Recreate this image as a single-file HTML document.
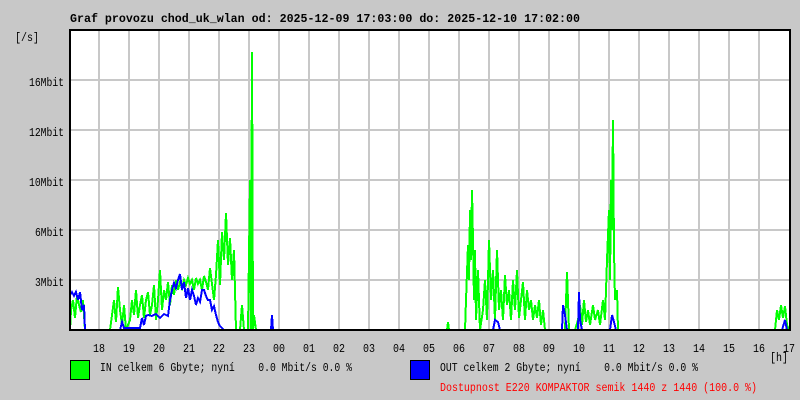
<!DOCTYPE html>
<html><head><meta charset="utf-8"><style>
html,body{margin:0;padding:0;background:#c8c8c8;width:800px;height:400px;overflow:hidden}
svg{display:block}
text{font-family:"Liberation Mono",monospace;font-size:11.5px;fill:#000}
</style></head><body>
<svg width="800" height="400" viewBox="0 0 800 400" xmlns="http://www.w3.org/2000/svg" shape-rendering="crispEdges">
<rect x="0" y="0" width="800" height="400" fill="#c8c8c8"/>
<text x="70" y="22" font-weight="bold" style="font-size:12px" textLength="510" lengthAdjust="spacingAndGlyphs">Graf provozu chod_uk_wlan od: 2025-12-09 17:03:00 do: 2025-12-10 17:02:00</text>
<text x="15" y="41" textLength="24" lengthAdjust="spacingAndGlyphs">[/s]</text>
<rect x="70" y="30" width="720" height="300" fill="#fff"/>
<g stroke="#c8c8c8" stroke-width="2">
<line x1="99" y1="30" x2="99" y2="330"/><line x1="129" y1="30" x2="129" y2="330"/><line x1="159" y1="30" x2="159" y2="330"/><line x1="189" y1="30" x2="189" y2="330"/><line x1="219" y1="30" x2="219" y2="330"/><line x1="249" y1="30" x2="249" y2="330"/><line x1="279" y1="30" x2="279" y2="330"/><line x1="309" y1="30" x2="309" y2="330"/><line x1="339" y1="30" x2="339" y2="330"/><line x1="369" y1="30" x2="369" y2="330"/><line x1="399" y1="30" x2="399" y2="330"/><line x1="429" y1="30" x2="429" y2="330"/><line x1="459" y1="30" x2="459" y2="330"/><line x1="489" y1="30" x2="489" y2="330"/><line x1="519" y1="30" x2="519" y2="330"/><line x1="549" y1="30" x2="549" y2="330"/><line x1="579" y1="30" x2="579" y2="330"/><line x1="609" y1="30" x2="609" y2="330"/><line x1="639" y1="30" x2="639" y2="330"/><line x1="669" y1="30" x2="669" y2="330"/><line x1="699" y1="30" x2="699" y2="330"/><line x1="729" y1="30" x2="729" y2="330"/><line x1="759" y1="30" x2="759" y2="330"/>
<line x1="70" y1="80" x2="790" y2="80"/><line x1="70" y1="130" x2="790" y2="130"/><line x1="70" y1="180" x2="790" y2="180"/><line x1="70" y1="230" x2="790" y2="230"/><line x1="70" y1="280" x2="790" y2="280"/>
</g>
<g fill="none" stroke-width="2" stroke-linejoin="miter">
<polyline stroke="#00ff00" points="70,330 71,310 73,300 75,318 77,295 79,305 81,312 83,300 85,330 110,330 112,315 114,300 116,322 118,287 120,310 122,325 124,305 126,330 130,320 132,300 134,315 136,290 138,318 140,305 142,295 144,318 146,300 148,292 150,315 152,305 154,285 156,320 158,300 160,270 162,310 164,290 166,300 168,282 170,305 172,285 174,295 176,280 178,290 180,282 182,288 184,280 186,285 188,278 190,284 192,280 194,290 196,278 198,284 200,280 202,290 204,276 206,282 208,290 210,268 212,284 214,300 216,275 218,240 220,285 222,232 224,260 226,213 228,265 230,238 232,280 234,250 236,330 240,330 242,305 244,330 248,330 250,180 251,330 252,52 253,330 254,315 256,330 447,330 448,322 449,330 465,330 466,300 468,245 469,280 470,210 471,260 472,190 473,240 474,300 475,250 476,320 478,270 480,330 483,310 485,280 487,320 489,240 491,300 493,270 495,320 497,250 499,310 501,290 503,320 505,275 507,305 509,290 511,320 513,280 515,310 517,270 519,318 521,300 523,282 525,320 527,290 529,310 531,300 533,320 535,305 537,318 539,300 541,325 543,310 545,330 565,330 567,272 569,330 575,330 578,320 580,305 582,325 584,300 586,322 588,310 590,325 593,305 595,320 598,310 600,325 603,300 605,320 607,260 609,210 610,280 611,180 612,230 613,120 614,250 615,300 617,290 618,330 775,330 777,310 779,320 781,305 783,318 785,306 787,325 789,330"/>
<polyline stroke="#0000ff" points="70,295 72,292 74,296 76,292 78,300 80,292 82,310 84,305 85,330 120,330 122,322 124,328 140,328 142,318 144,325 146,316 148,315 152,316 156,314 160,318 164,314 168,316 170,300 172,290 174,283 176,288 178,280 180,274 182,290 184,282 186,298 188,288 190,300 192,290 194,296 196,305 198,298 200,302 202,290 204,290 206,296 208,300 210,300 212,310 214,306 216,315 218,322 220,326 224,330 271,330 272,315 273,330 493,330 495,320 498,322 500,330 562,330 563,305 565,315 567,330 578,330 579,292 580,320 582,330 610,330 612,315 614,322 616,330 782,330 785,320 787,330"/>
</g>
<path d="M70,30 H790 V330 H70 Z" fill="none" stroke="#000" stroke-width="2"/>
<g text-anchor="end" lengthAdjust="spacingAndGlyphs">
<text x="64" y="86" textLength="35" lengthAdjust="spacingAndGlyphs">16Mbit</text><text x="64" y="136" textLength="35" lengthAdjust="spacingAndGlyphs">12Mbit</text><text x="64" y="186" textLength="35" lengthAdjust="spacingAndGlyphs">10Mbit</text><text x="64" y="236" textLength="29" lengthAdjust="spacingAndGlyphs">6Mbit</text><text x="64" y="286" textLength="29" lengthAdjust="spacingAndGlyphs">3Mbit</text>
</g>
<g text-anchor="middle">
<text x="99" y="352" textLength="12" lengthAdjust="spacingAndGlyphs">18</text><text x="129" y="352" textLength="12" lengthAdjust="spacingAndGlyphs">19</text><text x="159" y="352" textLength="12" lengthAdjust="spacingAndGlyphs">20</text><text x="189" y="352" textLength="12" lengthAdjust="spacingAndGlyphs">21</text><text x="219" y="352" textLength="12" lengthAdjust="spacingAndGlyphs">22</text><text x="249" y="352" textLength="12" lengthAdjust="spacingAndGlyphs">23</text><text x="279" y="352" textLength="12" lengthAdjust="spacingAndGlyphs">00</text><text x="309" y="352" textLength="12" lengthAdjust="spacingAndGlyphs">01</text><text x="339" y="352" textLength="12" lengthAdjust="spacingAndGlyphs">02</text><text x="369" y="352" textLength="12" lengthAdjust="spacingAndGlyphs">03</text><text x="399" y="352" textLength="12" lengthAdjust="spacingAndGlyphs">04</text><text x="429" y="352" textLength="12" lengthAdjust="spacingAndGlyphs">05</text><text x="459" y="352" textLength="12" lengthAdjust="spacingAndGlyphs">06</text><text x="489" y="352" textLength="12" lengthAdjust="spacingAndGlyphs">07</text><text x="519" y="352" textLength="12" lengthAdjust="spacingAndGlyphs">08</text><text x="549" y="352" textLength="12" lengthAdjust="spacingAndGlyphs">09</text><text x="579" y="352" textLength="12" lengthAdjust="spacingAndGlyphs">10</text><text x="609" y="352" textLength="12" lengthAdjust="spacingAndGlyphs">11</text><text x="639" y="352" textLength="12" lengthAdjust="spacingAndGlyphs">12</text><text x="669" y="352" textLength="12" lengthAdjust="spacingAndGlyphs">13</text><text x="699" y="352" textLength="12" lengthAdjust="spacingAndGlyphs">14</text><text x="729" y="352" textLength="12" lengthAdjust="spacingAndGlyphs">15</text><text x="759" y="352" textLength="12" lengthAdjust="spacingAndGlyphs">16</text><text x="789" y="352" textLength="12" lengthAdjust="spacingAndGlyphs">17</text>
</g>
<text x="770" y="361" textLength="18" lengthAdjust="spacingAndGlyphs">[h]</text>
<rect x="70.5" y="360.5" width="19" height="19" fill="#00ff00" stroke="#000"/>
<text x="100" y="371" xml:space="preserve" textLength="252" lengthAdjust="spacingAndGlyphs">IN celkem 6 Gbyte; nyní    0.0 Mbit/s 0.0 %</text>
<rect x="410.5" y="360.5" width="19" height="19" fill="#0000ff" stroke="#000"/>
<text x="440" y="371" xml:space="preserve" textLength="258" lengthAdjust="spacingAndGlyphs">OUT celkem 2 Gbyte; nyní    0.0 Mbit/s 0.0 %</text>
<text x="440" y="391" style="fill:#ff0000" textLength="317" lengthAdjust="spacingAndGlyphs">Dostupnost E220 KOMPAKTOR semik 1440 z 1440 (100.0 %)</text>
</svg>
</body></html>
